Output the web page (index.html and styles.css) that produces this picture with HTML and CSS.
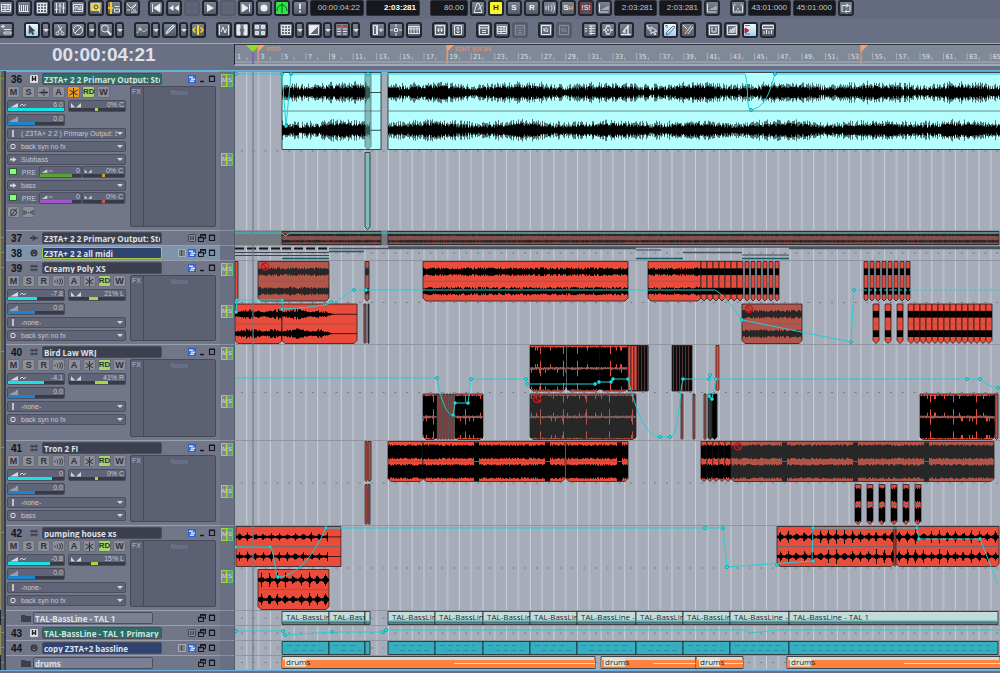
FILE: index.html
```html
<!DOCTYPE html>
<html lang="en">
<head>
    <meta charset="UTF-8">
    <meta name="viewport" content="width=device-width, initial-scale=1.0">
    <title>Track View</title>
    <link rel="stylesheet" href="styles.css">
</head>
<body>
    <!-- Icon set -->
    <svg class="icon-defs" aria-hidden="true">
        <symbol id="i-tracks" viewBox="0 0 12 12"><path d="M1.5 2.5h9v7h-9zM1.5 5h9M1.5 7.5h9M5 2.5v7M7 3.7h2M7 6.2h2"/></symbol>
        <symbol id="i-piano" viewBox="0 0 12 12"><path d="M1.5 3v6M3.5 3v6M5.5 3v6M7.5 3v6M9.5 3v6M1 9.5h10"/></symbol>
        <symbol id="i-grid" viewBox="0 0 12 12"><path d="M1.5 1.5h9v9h-9zM4.5 1.5v9M7.5 1.5v9M1.5 4.5h9M1.5 7.5h9"/></symbol>
        <symbol id="i-faders" viewBox="0 0 12 12"><path d="M2.5 1v10M6 1v10M9.5 1v10M1 7.5h3M4.5 4h3M8 6h3" /></symbol>
        <symbol id="i-mixer" viewBox="0 0 12 12"><path d="M1.5 2.5h9v7h-9zM3 4.5h3M7.5 4.5h1.5M3 7.5h1M5.5 7.5h4M1.5 6h9"/></symbol>
        <symbol id="i-find" viewBox="0 0 12 12"><path d="M1 1.5h9v7H1z" fill="#e5d95c" stroke="#e5d95c"/><circle cx="6" cy="5" r="2" stroke="#444"/><path d="M7.5 7l3 4"/></symbol>
        <symbol id="i-ylist" viewBox="0 0 12 12"><path d="M3 0v12M0 6h5" stroke="#f2c531" stroke-width="2"/><path d="M6.5 4.5h5M6.5 7h5v3h-5z"/></symbol>
        <symbol id="i-edit" viewBox="0 0 12 12"><path d="M1 2l4 4 5-4M1 8h3M5 10h6M10 3l-5 5M7 8h3"/></symbol>
        <symbol id="i-rtz" viewBox="0 0 12 12"><path d="M2.5 2v8M10 2v8L4 6z" fill="#eee"/></symbol>
        <symbol id="i-rew" viewBox="0 0 12 12"><path d="M5.5 3v6L1 6zM11 3v6L6.5 6z" fill="#eee" stroke="none"/></symbol>
        <symbol id="i-stop" viewBox="0 0 12 12"><path d="M3 3h6v6H3z" stroke="none" fill="#565b6b"/></symbol>
        <symbol id="i-play" viewBox="0 0 12 12"><path d="M3 2v8l7-4z" fill="#eee" stroke="none"/></symbol>
        <symbol id="i-pause" viewBox="0 0 12 12"><path d="M4 3v6M8 3v6" stroke="#565b6b" stroke-width="2"/></symbol>
        <symbol id="i-end" viewBox="0 0 12 12"><path d="M9.5 2v8M2 2v8l6-4z" fill="#eee"/></symbol>
        <symbol id="i-rec" viewBox="0 0 12 12"><circle cx="6" cy="6" r="3.5" fill="#eee" stroke="none"/></symbol>
        <symbol id="i-engine" viewBox="0 0 12 12"><path d="M1 9c0-8 10-8 10 0M6 1v10" stroke="#0b5a16"/></symbol>
        <symbol id="i-panic" viewBox="0 0 12 12"><path d="M6 1.5V7M6 8.500v2" stroke-width="2"/></symbol>
        <symbol id="i-metro" viewBox="0 0 12 12"><path d="M5 1.500h2l3 9H2zM6 8l4-5"/></symbol>
        <symbol id="i-waves" viewBox="0 0 12 12"><path d="M2 4v4M4 3.500c1 2 1 3 0 5M6.500 2.500c2 2 2 5 0 7M9 1.500c2 3 2 6 0 9"/></symbol>
        <symbol id="i-ramp" viewBox="0 0 12 12"><path d="M1.500 2v8h9M4 8V7M6 8V6M8 8V5M10 8V4"/></symbol>
        <symbol id="i-punch" viewBox="0 0 12 12"><path d="M1.500 10V4l2-2M10.500 10V4l-2-2M4 9h1M7 9h1M5 7h2M1.500 10h9"/></symbol>
        <symbol id="i-loop" viewBox="0 0 12 12"><path d="M3.500 9.500H2v-6h6M6 1.500l2.500 2L6 5.500M8.500 3.500H10v6H5M7 7.500l-2 2 2 2"/></symbol>
        <symbol id="i-addtrack" viewBox="0 0 12 12"><path d="M1 2.500h4M3 .5v4M4 5.500h7M4 8h7v2H4z"/></symbol>
        <symbol id="i-cursor" viewBox="0 0 12 12"><path d="M3 1v9l2-2 1.500 3 1.500-1L6.500 7H9z" fill="#3f4a58" stroke="#3f4a58" stroke-width=".5"/></symbol>
        <symbol id="i-cut" viewBox="0 0 12 12"><path d="M4 1l4 7M8 3L4 8"/><circle cx="3.500" cy="9.500" r="1.500"/><circle cx="8.500" cy="9.500" r="1.500"/></symbol>
        <symbol id="i-mute" viewBox="0 0 12 12"><circle cx="6" cy="6" r="4.500"/><path d="M3 9l6-6"/></symbol>
        <symbol id="i-zoom" viewBox="0 0 12 12"><circle cx="5" cy="4.500" r="3.500"/><path d="M7.500 7l3.500 4" stroke-width="2"/></symbol>
        <symbol id="i-env" viewBox="0 0 12 12"><path d="M1 9l3-4 4 3 3-3" stroke-dasharray="2 1"/><circle cx="4" cy="5" r="1"/></symbol>
        <symbol id="i-draw" viewBox="0 0 12 12"><path d="M2 10l1-3 6-6 1.500 1.500-6 6z" fill="#8fb0cc"/></symbol>
        <symbol id="i-scrub" viewBox="0 0 12 12"><path d="M6 1v10" stroke="#f6d81c" stroke-width="2"/><path d="M3.500 3.500L1 6l2.500 2.500M8.500 3.500L11 6 8.500 8.500" stroke="#f6d81c" stroke-width="1.500"/></symbol>
        <symbol id="i-snapa" viewBox="0 0 12 12"><path d="M1.500 1v10M10.500 1v10M3 8l2-5 2 6 1.500-4"/></symbol>
        <symbol id="i-fade" viewBox="0 0 12 12"><path d="M1 1h3v3l-1 2 1 2v3H1zM11 1H8v3l1 2-1 2v3h3z" fill="#e7e9ee"/></symbol>
        <symbol id="i-four" viewBox="0 0 12 12"><path d="M1.500 1.500h3v3h-3zM7.500 1.500h3v3h-3zM1.500 7.500h3v3h-3zM7.500 7.500h3v3h-3z" fill="#c9ccd5"/></symbol>
        <symbol id="i-contrast" viewBox="0 0 12 12"><path d="M1.500 1.500h9v9h-9z"/><path d="M1.500 1.500h9l-9 9z" fill="#eee"/></symbol>
        <symbol id="i-redlist" viewBox="0 0 12 12"><path d="M1 2h4M7 2h4" stroke="#c8343a" stroke-width="2"/><path d="M1 5h4M7 5h4M1 7.500h4M7 7.500h4M1 10h4M7 10h4"/></symbol>
        <symbol id="i-insert" viewBox="0 0 12 12"><path d="M1.500 1.500h3v9h-3zM5.500 1v10M7 6h4.500M9 4v4"/></symbol>
        <symbol id="i-move" viewBox="0 0 12 12"><path d="M4.500 4.500h3v3h-3zM6 0v3M6 9v3M0 6h3M9 6h3"/></symbol>
        <symbol id="i-film" viewBox="0 0 12 12"><path d="M.5 2.500h11v7H.5zM.5 5h11M3 2.500v7M6 2.500v7M9 2.500v7"/></symbol>
        <symbol id="i-fith" viewBox="0 0 12 12"><path d="M1.500 1.500h9v9h-9zM3 6h6M4.500 4v4M7.500 4v4M6 1v2M6 9v2"/></symbol>
        <symbol id="i-fitv" viewBox="0 0 12 12"><path d="M2.500 1.500h7v9h-7zM6 3v6M4.500 4.500L6 3l1.500 1.500M4.500 7.500L6 9l1.500-1.500"/></symbol>
        <symbol id="i-window" viewBox="0 0 12 12"><path d="M1.500 1.500h9v9h-9zM1.500 4h9M4 6.500h4M4 8.500h4"/></symbol>
        <symbol id="i-undo" viewBox="0 0 12 12"><path d="M1.500 1.500h9v9h-9zM4 4v3h3M4.500 6c1-3 4-2 3 2"/></symbol>
        <symbol id="i-align" viewBox="0 0 12 12"><path d="M5 2h6M5 4.500h6M5 7h6M5 9.500h6M1 4.500h2M1 7h2M7 1v10"/></symbol>
        <symbol id="i-spread" viewBox="0 0 12 12"><path d="M4 2h4M1 6h3M5 6h2M8 6h3M4 10h4M3 4h2M8 4h1M3 8h2M8 8h1" stroke-width="1.500"/></symbol>
        <symbol id="i-micro" viewBox="0 0 12 12"><path d="M8 1v9M8 2L3 8M1 10.500h10M3 8h3" stroke-width="1.500"/></symbol>
        <symbol id="i-pick" viewBox="0 0 12 12"><path d="M1 1l3 6M1 4h3M5 3v7l2-2 2 3 1-1-2-2.500 3-.5z"/></symbol>
        <symbol id="i-pencil" viewBox="0 0 12 12"><path d="M1 2l2-1v3M2 11l1-3 6-6 2 1-6 7z"/></symbol>
        <symbol id="i-brush" viewBox="0 0 12 12"><path d="M1 1l4 4M3 10l6-8M6 10l5-7" /><path d="M3 6l3 3" stroke="#c86a60" stroke-width="2"/></symbol>
        <symbol id="i-note" viewBox="0 0 12 12"><path d="M1.500 1.500h9v9h-9zM4 3v5h4V3"/></symbol>
        <symbol id="i-wavebox" viewBox="0 0 12 12"><path d="M1.500 1.500h9v9h-9zM3 9l2-4v4l2-5v5l2-6v6"/></symbol>
        <symbol id="i-colors" viewBox="0 0 12 12"><path d="M1 1.500h5M1 10h5"/><path d="M1 4l4 2.500L1 9z" fill="#b52b35" stroke="#b52b35"/></symbol>
        <symbol id="i-rulerbox" viewBox="0 0 12 12"><path d="M.5 1.500h11v3H.5zM2 10V7M4.500 10V6M7 10V7M9.500 10V6"/></symbol>
        <symbol id="i-restore" viewBox="0 0 8 8"><path d="M2.500 3V.5h5v4H6M.5 3.500h5v4h-5z" stroke="#15171c"/><path d="M2 1h6M0 3.500h6" stroke="#15171c" stroke-width="1.500"/></symbol>
        <symbol id="i-max" viewBox="0 0 8 8"><path d="M1.500 1.500h5v5h-5zM1 1.200h6" stroke="#15171c" stroke-width="1.200"/></symbol>
        <symbol id="i-min" viewBox="0 0 8 8"><path d="M2 6.500h4" stroke="#15171c" stroke-width="1.500"/></symbol>
        <symbol id="i-layers" viewBox="0 0 8 8"><rect width="8" height="8" rx="1" fill="#3c6fd8" stroke="#1f3f8c" stroke-width=".5"/><path d="M1 1.500h4v1.500H1zM3 3.500h4V5H3zM2 5.500h4V7H2z" fill="#cfe0ff" stroke="none"/></symbol>
        <symbol id="i-lanes" viewBox="0 0 8 8"><rect width="8" height="8" rx="1" fill="#a9adb8" stroke="none"/><path d="M1 2h6M1 4h6M1 6h6M3.500 1v6" stroke="#33363f" stroke-width=".8"/></symbol>
        <symbol id="i-freeze" viewBox="0 0 8 8"><rect x=".5" y=".5" width="7" height="7" rx="1" fill="#888c98" stroke="#33363f" stroke-width=".8"/><path d="M2.500 2v4M4 2v4M5.500 2v4" stroke="#33363f" stroke-width=".8"/></symbol>
        <symbol id="i-synth" viewBox="0 0 8 8"><rect width="8" height="8" rx="1" fill="#d9dbe0" stroke="none"/><path d="M2.500 1v5M5.500 1v5M2.500 4h3" stroke="#222" stroke-width="1.300"/></symbol>
        <symbol id="i-audio" viewBox="0 0 8 8"><path d="M0 4h8M1.500 3v2M3 1v6M4.500 2v4M6 3v2" stroke="#33363f"/></symbol>
        <symbol id="i-midi" viewBox="0 0 8 8"><circle cx="4" cy="4" r="3.500" fill="#33363f" stroke="none"/><path d="M2 4h.8M5.200 4H6M4 2v.8M3 5.500h2" stroke="#a9adb8" stroke-width=".8"/></symbol>
        <symbol id="i-stereo" viewBox="0 0 8 8"><path d="M0 2.200h8M0 5.800h8M2 .8v3M4 1.200v2M6 .8v3M2 4.500v3M4 5v2M6 4.500v3" stroke="#33363f" stroke-width=".9"/></symbol>
        <symbol id="i-folder" viewBox="0 0 10 8"><path d="M0 1h4l1 1h5v6H0z" fill="#3c3f4d" stroke="none"/></symbol>
    </svg>

    <header class="bars">
        <div class="toolbar toolbar--transport">
            <div class="group">
                <button class="btn" aria-label="Track view"><svg><use href="#i-tracks"/></svg></button>
                <button class="btn" aria-label="Piano roll"><svg><use href="#i-piano"/></svg></button>
                <button class="btn" aria-label="Step grid"><svg><use href="#i-grid"/></svg></button>
                <button class="btn" aria-label="Console"><svg><use href="#i-faders"/></svg></button>
                <button class="btn" aria-label="Mixer"><svg><use href="#i-mixer"/></svg></button>
                <button class="btn" aria-label="Browser"><svg><use href="#i-find"/></svg></button>
                <button class="btn" aria-label="Event list"><svg><use href="#i-ylist"/></svg></button>
                <button class="btn" aria-label="Tempo"><svg><use href="#i-edit"/></svg></button>
            </div>
            <div class="group group--close">
                <button class="btn" aria-label="Return to zero"><svg><use href="#i-rtz"/></svg></button>
                <button class="btn" aria-label="Rewind"><svg><use href="#i-rew"/></svg></button>
                <button class="btn btn--off" aria-label="Stop" disabled><svg><use href="#i-stop"/></svg></button>
                <button class="btn" aria-label="Play"><svg><use href="#i-play"/></svg></button>
                <button class="btn btn--off" aria-label="Pause" disabled><svg><use href="#i-pause"/></svg></button>
                <button class="btn" aria-label="Go to end"><svg><use href="#i-end"/></svg></button>
                <button class="btn" aria-label="Record"><svg><use href="#i-rec"/></svg></button>
                <button class="btn btn--green" aria-label="Audio engine"><svg><use href="#i-engine"/></svg></button>
                <button class="btn" aria-label="Reset"><svg><use href="#i-panic"/></svg></button>
                <output class="lcd lcd--wide">00:00:04:22</output>
                <output class="lcd lcd--wide lcd--lit">2:03:281</output>
            </div>
            <div class="group">
                <output class="lcd lcd--tempo">80.00</output>
                <button class="btn" aria-label="Metronome"><svg><use href="#i-metro"/></svg></button>
                <button class="btn btn--yellow">H</button>
                <button class="btn">S</button>
                <button class="btn">R</button>
                <button class="btn" aria-label="Input echo"><svg><use href="#i-waves"/></svg></button>
                <button class="btn btn--gold">S<sub>H</sub></button>
                <button class="btn btn--red">!S!</button>
                <button class="btn" aria-label="Automation"><svg><use href="#i-ramp"/></svg></button>
                <output class="lcd">2:03:281</output>
                <output class="lcd">2:03:281</output>
                <button class="btn" aria-label="Set punch"><svg><use href="#i-ramp"/></svg></button>
            </div>
            <div class="group">
                <button class="btn" aria-label="Punch in"><svg><use href="#i-punch"/></svg></button>
                <output class="lcd">43:01:000</output>
                <output class="lcd">45:01:000</output>
                <button class="btn" aria-label="Loop"><svg><use href="#i-loop"/></svg></button>
            </div>
        </div>

        <div class="toolbar toolbar--tools">
            <div class="group">
                <button class="btn" aria-label="Add track"><svg><use href="#i-addtrack"/></svg></button>
            </div>
            <div class="group">
                <div class="split"><button class="btn btn--on" aria-label="Select"><svg><use href="#i-cursor"/></svg></button><button class="btn btn--drop" aria-label="Select options"></button></div>
                <button class="btn" aria-label="Split"><svg><use href="#i-cut"/></svg></button>
                <div class="split"><button class="btn" aria-label="Mute"><svg><use href="#i-mute"/></svg></button><button class="btn btn--drop" aria-label="Mute options"></button></div>
                <div class="split"><button class="btn" aria-label="Zoom"><svg><use href="#i-zoom"/></svg></button><button class="btn btn--drop" aria-label="Zoom options"></button></div>
            </div>
            <div class="group">
                <div class="split"><button class="btn" aria-label="Envelope"><svg><use href="#i-env"/></svg></button><button class="btn btn--drop" aria-label="Envelope options"></button></div>
                <div class="split"><button class="btn" aria-label="Draw"><svg><use href="#i-draw"/></svg></button><button class="btn btn--drop" aria-label="Draw options"></button></div>
                <button class="btn" aria-label="Scrub"><svg><use href="#i-scrub"/></svg></button>
            </div>
            <div class="group">
                <button class="btn" aria-label="Transients"><svg><use href="#i-snapa"/></svg></button>
                <button class="btn" aria-label="Crossfade"><svg><use href="#i-fade"/></svg></button>
                <button class="btn" aria-label="Groups"><svg><use href="#i-four"/></svg></button>
            </div>
            <div class="group">
                <div class="split"><button class="btn" aria-label="Snap"><svg><use href="#i-grid"/></svg></button><button class="btn btn--drop" aria-label="Snap options"></button></div>
                <div class="split"><button class="btn" aria-label="Fades"><svg><use href="#i-contrast"/></svg></button><button class="btn btn--drop" aria-label="Fade options"></button></div>
                <div class="split"><button class="btn" aria-label="Ripple"><svg><use href="#i-redlist"/></svg></button><button class="btn btn--drop" aria-label="Ripple options"></button></div>
            </div>
            <div class="group">
                <button class="btn" aria-label="Insert"><svg><use href="#i-insert"/></svg></button>
                <button class="btn" aria-label="Nudge"><svg><use href="#i-move"/></svg></button>
                <button class="btn" aria-label="Video"><svg><use href="#i-film"/></svg></button>
            </div>
            <div class="group">
                <button class="btn" aria-label="Fit width"><svg><use href="#i-fith"/></svg></button>
                <button class="btn" aria-label="Fit height"><svg><use href="#i-fitv"/></svg></button>
            </div>
            <div class="group">
                <button class="btn" aria-label="Inspector"><svg><use href="#i-window"/></svg></button>
                <button class="btn" aria-label="Properties"><svg><use href="#i-tracks"/></svg></button>
                <button class="btn btn--off" aria-label="List" disabled><svg><use href="#i-window"/></svg></button>
            </div>
            <div class="group">
                <button class="btn" aria-label="Undo"><svg><use href="#i-undo"/></svg></button>
                <button class="btn btn--off" aria-label="Redo" disabled><svg><use href="#i-undo"/></svg></button>
            </div>
            <div class="group">
                <button class="btn" aria-label="Align"><svg><use href="#i-align"/></svg></button>
                <button class="btn" aria-label="Spread"><svg><use href="#i-spread"/></svg></button>
                <button class="btn" aria-label="Analyze"><svg><use href="#i-micro"/></svg></button>
            </div>
            <div class="group">
                <button class="btn" aria-label="Pick"><svg><use href="#i-pick"/></svg></button>
                <button class="btn btn--on" aria-label="Pencil"><svg><use href="#i-pencil"/></svg></button>
                <button class="btn" aria-label="Brush"><svg><use href="#i-brush"/></svg></button>
            </div>
            <div class="group">
                <button class="btn" aria-label="Notes"><svg><use href="#i-note"/></svg></button>
                <button class="btn" aria-label="Waveforms"><svg><use href="#i-wavebox"/></svg></button>
                <button class="btn btn--on" aria-label="Clip colors"><svg><use href="#i-colors"/></svg></button>
                <button class="btn" aria-label="Ruler"><svg><use href="#i-rulerbox"/></svg></button>
            </div>
        </div>

        <div class="timebar">
            <output class="clock">00:00:04:21</output>
            <svg class="ruler" id="ruler" aria-label="Bars"></svg>
        </div>
    </header>

    <main class="tracks" id="tracks"></main>
    <footer class="bottom"></footer>

    <script src="tracks.js"></script>
</body>
</html>
```
FILE: styles.css
```css
* {
    box-sizing: border-box;
}

body {
    margin: 0;
    background-color: #6a7084;
    color: #d5d8e2;
    font-family: "Liberation Sans", Arial, sans-serif;
    font-size: 8px;
    overflow-x: hidden;
}

button,
input,
select {
    margin: 0;
    padding: 0;
    border: 0;
    font-family: inherit;
    color: inherit;
}

svg {
    display: block;
    fill: none;
    stroke: #e2e5ec;
}

svg text {
    stroke: none;
}

.icon-defs {
    display: none;
}

/* Toolbars */
.toolbar {
    display: flex;
    align-items: center;
    padding: 0;
    margin-left: -2px;
}

.toolbar--transport {
    height: 19px;
    padding-bottom: 4px;
    background-color: #656b7f;
}

.toolbar--tools {
    height: 24px;
    padding-bottom: 2px;
}

.group {
    display: flex;
    flex: none;
    gap: 2px;
    margin-left: 10px;
}

.group:first-child {
    margin-left: 0;
}

.group--close {
    margin-left: 8px;
}

.split {
    display: flex;
    gap: 1px;
}

.btn {
    display: flex;
    align-items: center;
    justify-content: center;
    width: 16px;
    height: 16px;
    border: 2px solid #23262e;
    border-radius: 3px;
    background: linear-gradient(#7c8390, #545b69);
    color: #f0f1f4;
    font-size: 8px;
    font-weight: bold;
}

.btn svg {
    flex: none;
    width: 12px;
    height: 12px;
}

.btn sub {
    font-size: 6px;
    color: #e8c93a;
    vertical-align: -2px;
}

.btn--drop {
    width: 9px;
}

.btn--drop::after {
    content: "";
    border: 3px solid transparent;
    border-top-color: #e2e5ec;
    border-bottom: 0;
}

.btn--off {
    background: #5f6577;
    border-color: #565b6b;
}

.btn--off svg {
    opacity: 0.3;
}

.btn--on {
    background: linear-gradient(#f2fbff, #9ed0f0);
}

.btn--on svg {
    stroke: #5d7688;
}

.btn--green {
    background: #2ce64a;
}

.btn--yellow {
    background: #fff32a;
    color: #333;
}

.btn--red {
    color: #f0c4c6;
    background: linear-gradient(90deg, #8a2e38, #50565f 40%, #50565f 60%, #8a2e38);
    font-size: 7px;
}

.lcd {
    width: 43px;
    height: 16px;
    padding-right: 3px;
    border: 1px solid #2d3038;
    border-radius: 2px;
    background-color: #17181d;
    color: #c3c6cd;
    font-size: 8px;
    line-height: 14px;
    text-align: right;
    white-space: nowrap;
}

.lcd--wide {
    width: 54px;
}

.lcd--lit {
    color: #fff;
    font-weight: bold;
}

.lcd--tempo {
    width: 38px;
}

/* Clock and ruler */
.timebar {
    display: flex;
    height: 28px;
    border-top: 1px solid #a5a9b3;
    border-bottom: 1px solid #68b1dc;
}

.clock {
    flex: none;
    width: 234px;
    padding-left: 52px;
    color: #dfe1ea;
    font-size: 19px;
    font-weight: bold;
    line-height: 22px;
}

.ruler {
    flex: 1;
    height: 22px;
    min-width: 0;
    background-color: #7f8998;
    border-left: 1px solid #22252d;
    border-top: 1px solid #33363f;
    border-bottom: 2px solid #a3a9b5;
    font-family: "DejaVu Sans Condensed", "DejaVu Sans", sans-serif;
    font-size: 7px;
}

.ruler text {
    fill: #dfe2e9;
}

.ruler .marker {
    fill: #f0936a;
}

/* Track list */
.tracks {
    position: relative;
    border-bottom: 1px solid #68b1dc;
}

.track {
    display: flex;
}

.gutter {
    flex: none;
    width: 6px;
    border-left: 1px solid #8f8f55;
    border-right: 2px solid #3a3d49;
    background: linear-gradient(#8f8f55, #8f8f55) 0 7px / 4px 1px no-repeat #5c6173;
}

.gutter--folder {
    border-left-color: #22252d;
}

.strip {
    display: flex;
    flex: none;
    flex-direction: column;
    width: 214px;
    padding-left: 1px;
    border-top: 1px solid #9a9fae;
    background-color: #717789;
}

.track--selected .strip {
    background-color: #7f94aa;
}

.strip-head {
    display: flex;
    flex: none;
    align-items: center;
    height: 14px;
    padding-right: 4px;
}

.num {
    width: 15px;
    margin-left: 4px;
    color: #111318;
    font-size: 10px;
    font-weight: bold;
}

.kind {
    width: 8px;
    height: 8px;
    margin-left: 4px;
    margin-right: 4px;
}

.kind--folder {
    width: 10px;
    margin-left: 14px;
    margin-right: 2px;
}

.name {
    width: 120px;
    height: 12px;
    padding: 0 1px;
    border: 1px solid #4a4e5e;
    border-radius: 2px;
    background-color: #3c3f4d;
    color: #dfe2ea;
    font-family: "Open Sans", "Noto Sans", sans-serif;
    font-size: 8px;
    font-weight: 700;
    line-height: 10px;
}

.name--green {
    background-color: #2f6c66;
    color: #cfe6e0;
}

.name--blue {
    background-color: #2f4371;
}

.name--edit {
    border-color: #a6c93c;
}

.name--folder {
    background-color: #7b8192;
}

.win {
    display: flex;
    gap: 2px;
    margin-left: auto;
}

.win svg {
    width: 8px;
    height: 8px;
}

.win button {
    background: none;
}

.strip-body {
    display: flex;
    flex: 1;
    gap: 4px;
}

.controls {
    display: flex;
    flex-direction: column;
    gap: 2px;
    width: 119px;
}

.row {
    display: flex;
    justify-content: space-between;
    height: 12px;
}

.tiny {
    width: 13px;
    height: 12px;
    border: 1px solid #6a6d78;
    border-radius: 2px;
    background-color: #8e9099;
    color: #2f323b;
    font-size: 9px;
    font-weight: bold;
    line-height: 10px;
}

.tiny--orange {
    background-color: #f79a1d;
}

.tiny--lime {
    background-color: #a8d46a;
    font-size: 8px;
}

.tiny svg {
    width: 11px;
    height: 9px;
    stroke: #2f323b;
}

.row--left {
    justify-content: flex-start;
    gap: 2px;
}

.slider {
    display: flex;
    flex-direction: column;
    width: 58px;
    height: 12px;
    border: 1px solid #4a4e5e;
    border-radius: 2px;
    background-color: #5f6476;
}

.slider-top {
    display: flex;
    align-items: center;
    justify-content: space-between;
    height: 7px;
    padding: 0 1px;
    color: #c3c8d6;
    font-size: 7px;
    line-height: 7px;
}

.slider-top svg {
    width: 20px;
    height: 6px;
    stroke: #d5d8e2;
}

.slider input {
    appearance: none;
    width: 100%;
    height: 3px;
    background: linear-gradient(90deg, #383b47 var(--from), var(--fill) var(--from), var(--fill) var(--to), #383b47 var(--to));
}

.slider input::-webkit-slider-thumb {
    appearance: none;
    width: 0;
    height: 0;
}

.combo {
    display: flex;
    align-items: center;
    height: 11px;
    padding: 0 2px;
    border: 1px solid #4a4e5e;
    border-radius: 2px;
    background-color: #5f6476;
}

.combo svg {
    flex: none;
    width: 7px;
    height: 7px;
    margin-right: 4px;
}

.combo select {
    appearance: none;
    flex: 1;
    min-width: 0;
    height: 9px;
    background: none;
    color: #c3c8d6;
    font-size: 7px;
    line-height: 9px;
}

.combo::after {
    content: "";
    flex: none;
    border: 3px solid transparent;
    border-top-color: #d5d8e2;
    border-bottom: 0;
}

.send-row {
    display: flex;
    height: 12px;
    margin-top: 1px;
    border-radius: 2px;
    background-color: #5f6476;
}

.send-row .slider {
    width: 43px;
}

.send-row .slider svg {
    width: 14px;
}

.send-on {
    appearance: none;
    width: 8px;
    height: 7px;
    margin: 2px;
    border: 1px solid #2f5a33;
    background-color: #7fff7a;
}

.pre {
    width: 20px;
    background: none;
    color: #c3c8d6;
    font-size: 7px;
}

.fx {
    display: flex;
    width: 86px;
    margin-bottom: 3px;
    border: 1px solid #454958;
    border-radius: 2px;
    background-color: #5b6072;
    font-size: 7px;
}

.fx-label {
    width: 13px;
    padding: 1px;
    border-right: 1px solid #454958;
    color: #b9bfce;
}

.fx-none {
    flex: 1;
    padding-top: 2px;
    color: #777c8d;
    font-weight: bold;
    text-align: center;
}

/* Mute / solo column */
.lanes-head {
    display: flex;
    flex: none;
    flex-direction: column;
    width: 15px;
    border-top: 1px solid #8a8fa0;
    border-right: 1px solid #565b6b;
}

.lane-head {
    display: flex;
    flex: 1;
    align-items: flex-start;
    padding: 2px 0 0 1px;
}

.lane-head button {
    width: 6px;
    height: 13px;
    border: 1px solid #a6d930;
    background-color: #7f8a8e;
    color: #d5d8e2;
    font-size: 6px;
    line-height: 11px;
}

.lane-head button + button {
    border-color: #5fc47a;
}

/* Arrange area */
.arrange {
    flex: 1;
    min-width: 0;
    overflow: hidden;
    background-color: #a6adb9;
    border-top: 1px solid #90959f;
}

.arrange .grid {
    stroke: #b7bec9;
    stroke-width: 2;
}

.arrange .grid--strong {
    stroke: #cbd1dc;
    stroke-width: 1;
}

.arrange .dot {
    stroke: #747a87;
    stroke-dasharray: 2 9.8;
}

.arrange .auto {
    stroke: #27cdd3;
}

.arrange .node {
    fill: #2ff0ee;
    stroke: #14a7b0;
    stroke-width: 1;
}

.arrange .label {
    fill: #23272c;
    font-family: "Open Sans", "Noto Sans", sans-serif;
    font-size: 8px;
}

.playhead {
    position: absolute;
    top: 0;
    bottom: 0;
    left: 252px;
    width: 2px;
    background-color: #737a8c;
    opacity: 0.6;
}

.bottom {
    height: 2px;
}
```
FILE: tracks.js
```js
const BAR = 11.81;
const BARS = 170;

// repeatable noise, so the waveforms stay the same between loads
let seed = 7;
function rnd() {
    seed = (seed * 16807) % 2147483647;
    return seed / 2147483647;
}

const RED = '#ea4b3a';
const MUTED = '#b4554a';

// n clips of width w, one every step pixels
function run(x, n, step, w, opts) {
    return Array.from({ length: n }, (_, i) => ({ x: x + i * step, w, ...opts }));
}

const band = { fill: RED, wave: 'band' };
const bandMuted = { fill: MUTED, wave: 'band', muted: true };
const block = { fill: RED, wave: 'block' };
const dense = { fill: RED, wave: 'dense' };
const fat = { fill: RED, wave: 'fat' };
const hits = { fill: RED, wave: 'hits' };
const midi = [[47, 47], [94, 36], [130, 5], [153, 47], [200, 48], [248, 47], [295, 47], [342, 59], [401, 47], [448, 47], [495, 59], [554, 209]];

const tracks = [
    {
        num: 36, kind: 'synth', name: 'Z3TA+ 2 2 Primary Output: Ste', style: 'green', h: 158, synth: true,
        vol: ['6.0', 100], pan: ['0% C', 46, 52], input: '( Z3TA+ 2 2 ) Primary Output: St', out: 'back syn no fx',
        sends: [['Subbass', '#58a332', '#c2a52e'], ['bass', '#a055c8', '#c25a5a']],
        lanes: [
            [{ x: 47, w: 99, fill: '#b4fffe', wave: 'noise', until: 88, square: true }, { x: 153, w: 613, fill: '#b4fffe', wave: 'noise', square: true }, { x: 130, w: 6, fill: '#5e8f92', opacity: 0.6 }],
            [{ x: 130, w: 5, fill: '#7fbdbd' }]
        ],
        auto: ['M0 2H47L51 54L56 2H510C514 12 511 38 516 38C532 34 534 20 540 2H765'],
        nodes: [[1, 2], [47, 2], [51, 54], [56, 2], [133, 2], [516, 38], [540, 2]]
    },
    {
        num: 37, kind: 'audio', name: 'Z3TA+ 2 2 Primary Output: Ste', h: 14, win: 'fr', shade: true,
        lanes: [[{ x: 47, w: 99, fill: '#8d4b46', wave: 'band', dim: true, square: true }, { x: 153, w: 611, fill: '#8d4b46', wave: 'band', dim: true, square: true }]],
        auto: ['M0 2H47L50 5L55 2H765']
    },
    { num: 38, kind: 'midi', name: 'Z3TA+ 2 2 all midi', style: 'blue edit', selected: true, h: 14, win: 'lbr', lanes: [[]], notes: true },
    {
        num: 39, kind: 'stereo', name: 'Creamy Poly XS', h: 83,
        vol: ['-7.8', 52], pan: ['21% L', 36, 52], input: '-none-', out: 'back syn no fx',
        lanes: [
            [{ x: 0, w: 3, fill: RED }, { x: 23, w: 71, ...bandMuted, icon: true }, { x: 130, w: 4, ...bandMuted }, { x: 188, w: 205, ...band }, { x: 413, w: 53, ...band },
                ...run(466, 7, 6, 6, block), ...run(510, 6, 6, 4, block), ...run(629, 8, 6, 4, block)],
            [{ x: 0, w: 47, ...band, loud: true }, { x: 47, w: 75, ...band, loud: true, until: 52 }, { x: 129, w: 2, fill: MUTED }, { x: 133, w: 1, fill: '#333' },
                { x: 507, w: 60, ...bandMuted, icon: true }, ...run(638, 3, 12, 6, block), ...run(673, 14, 6, 6, block)]
        ],
        auto: ['M1 51L2 39H47V48C75 47 95 43 96 42C115 36 110 30 119 29H480C492 36 500 50 507 59L616 81L619 29', 'M619 29H765'],
        dashed: 1,
        nodes: [[1, 51], [2, 39], [47, 39], [47, 48], [96, 41], [119, 29], [131, 29], [507, 59], [616, 81], [619, 29]]
    },
    {
        num: 40, kind: 'stereo', name: 'Bird Law WRJ', h: 95,
        vol: ['-4.1', 64], pan: ['41% R', 47, 70], input: '-none-', out: 'back syn no fx',
        lanes: [
            [{ x: 295, w: 36, ...dense }, { x: 332, w: 33, ...dense }, { x: 365, w: 28, ...dense }, { x: 393, w: 20, fill: '#000', square: true },
                ...run(393, 3, 3, 3, { fill: RED }), ...run(403, 4, 3, 1, { fill: MUTED }),
                { x: 437, w: 20, fill: '#000', square: true }, ...run(438, 6, 3, 1, { fill: MUTED }), { x: 481, w: 3, fill: RED }],
            [{ x: 188, w: 14, ...dense }, ...run(202, 6, 3, 2, { fill: MUTED }), { x: 220, w: 28, ...dense }, { x: 295, w: 106, ...dense, fill: MUTED, muted: true, icon: true },
                { x: 446, w: 2, fill: MUTED }, { x: 458, w: 2, fill: MUTED }, { x: 469, w: 2, fill: MUTED }, { x: 473, w: 4, fill: '#333' }, { x: 477, w: 5, fill: '#000' },
                { x: 685, w: 75, ...dense }, { x: 760, w: 3, fill: MUTED }]
        ],
        auto: ['M0 33H202C206 56 212 70 218 70L220 58H233L236 34H290L292 39H360L364 37H376L378 34H393C402 70 412 92 425 92H435C444 92 444 50 448 34H474L475 30L474 51L477 54L481 34H745C752 40 756 42 763 43'],
        nodes: [[202, 33], [218, 70], [220, 58], [233, 58], [236, 34], [291, 34], [292, 39], [360, 39], [364, 37], [376, 37], [378, 34], [393, 34], [425, 92], [435, 92], [448, 34], [474, 34], [475, 30], [474, 51], [477, 54], [481, 34], [732, 34], [745, 34], [763, 43]]
    },
    {
        num: 41, kind: 'stereo', name: 'Tron 2 FI', h: 84,
        vol: ['0', 79], pan: ['0% C', 46, 52], input: '-none-', out: 'bass',
        lanes: [
            [{ x: 130, w: 2, fill: RED }, { x: 133, w: 3, fill: MUTED }, { x: 153, w: 35, ...fat }, { x: 188, w: 142, ...fat }, { x: 331, w: 62, ...fat },
                ...run(466, 5, 6, 6, fat), { x: 496, w: 263, ...fat, fill: MUTED, muted: true, icon: true }],
            [{ x: 130, w: 2, fill: RED }, { x: 133, w: 2, fill: MUTED }, ...run(620, 6, 12, 6, fat)]
        ]
    },
    {
        num: 42, kind: 'stereo', name: 'pumping house xs', h: 84,
        vol: ['-0.8', 75], pan: ['15% L', 40, 52], input: '-none-', out: 'back syn no fx',
        lanes: [
            [{ x: 1, w: 105, ...hits, until: 92, square: true }, { x: 542, w: 117, ...hits, loud: true }, { x: 659, w: 2, fill: RED }, { x: 661, w: 103, ...hits, loud: true }],
            [{ x: 23, w: 71, ...hits, loud: true }]
        ],
        auto: ['M0 21H35C40 26 40 50 43 51C64 50 80 26 91 2H488L492 41L577 35L578 2H682L684 13H745L763 58'],
        nodes: [[1, 21], [35, 21], [43, 51], [91, 2], [470, 2], [488, 2], [492, 41], [542, 39], [578, 35], [578, 2], [682, 2], [684, 13], [745, 13]]
    },
    {
        folder: true, name: 'TAL-BassLine - TAL 1', h: 14, win: 'r',
        lanes: [midi.map(([x, w]) => ({ x, w, fill: '#c4dcd9', label: w > 9 ? 'TAL-BassLine - TAL 1' : '', line: '#36b0bc', square: true }))]
    },
    {
        num: 43, kind: 'synth', name: 'TAL-BassLine - TAL 1 Primary O', style: 'green', h: 14, win: 'fr', lanes: [[]],
        auto: ['M0 5H48L50 9L97 6H148L151 4H512L516 7L540 4H765'],
        nodes: [[1, 5], [48, 5], [50, 9], [97, 6], [148, 6], [151, 4]]
    },
    {
        num: 44, kind: 'midi', name: 'copy Z3TA+2 bassline', style: 'blue', h: 14, win: 'lbr',
        lanes: [midi.map(([x, w]) => ({ x, w, fill: '#35afc0', ticks: true, square: true }))]
    },
    {
        folder: true, name: 'drums', h: 13, win: 'r',
        lanes: [[[47, 313], [366, 95], [461, 47], [552, 213]].map(([x, w]) => ({ x, w, fill: '#cfd9d2', label: 'drums', orange: true, square: true }))]
    }
];

const esc = s => s.replace(/&/g, '&amp;').replace(/</g, '&lt;');

// one channel of a clip, as one stroke for each pixel
function channel(clip, cy, half) {
    const end = clip.until || clip.w;
    let d = '', peaks = '';
    for (let i = 0; i < end; i++) {
        let a;
        const r = rnd();
        if (clip.wave === 'noise') {
            a = half * (0.16 + 0.17 * r + 0.05 * Math.sin((clip.x + i) / 14));
            const p = a + half * 0.24 * rnd();
            peaks += `M${clip.x + i + 0.5} ${(cy - p).toFixed(1)}v${(2 * p).toFixed(1)}`;
        } else if (clip.wave === 'band') {
            a = half * (clip.loud ? 0.15 + 0.35 * Math.abs(Math.sin(i / 9)) * r + 0.05 : 0.22 + 0.22 * r);
            if (clip.until && i > end - 16) a *= (end - i) / 16;
        } else if (clip.wave === 'block') {
            a = half * 0.34;
        } else if (clip.wave === 'dense') {
            a = half * (r > 0.93 ? 0.6 : 0.84 + 0.1 * rnd());
            if (i % 23 === 10) a = half * 0.3;
        } else if (clip.wave === 'fat') {
            a = half * (i % 71 > 50 && i % 71 < 56 ? 0.95 : 0.58 + 0.18 * r);
        } else {
            const t = i % 8;
            a = half * (0.08 + (clip.loud ? 0.45 : 0.28) * Math.exp(-Math.abs(t - 3) / 1.4) * (0.5 + r));
        }
        d += `M${clip.x + i + 0.5} ${(cy - a).toFixed(1)}v${(2 * a).toFixed(1)}`;
    }
    const color = clip.muted || clip.dim ? '#272727' : '#000';
    return (peaks ? `<path d="${peaks}" stroke="#000" opacity=".55"/>` : '') +
        `<path d="${d}" stroke="${color}"/>` +
        (clip.until ? `<path d="M${clip.x} ${cy}h${clip.w}" stroke="#000" stroke-width=".7"/>` : '');
}

function drawClip(clip, top, h) {
    const c = clip.square ? 0 : Math.min(3, clip.w / 2);
    const { x, w } = clip;
    let s = `<path d="M${x} ${top}h${w}v${h - c}l${-c} ${c}h${-(w - 2 * c)}l${-c} ${-c}z" fill="${clip.fill}" stroke="#202226" stroke-width=".8" opacity="${clip.opacity || 1}"/>`;
    if (clip.orange) {
        s += `<path d="M${x} ${top + 3.5}h${w}v8h${-w}z" fill="#ff8340" stroke="none"/>`;
        s += `<path d="M${x + w * 0.55} ${top + 7}h${w * 0.45}" stroke="#f4dccb"/>`;
    }
    if (clip.wave) {
        s += channel(clip, top + h * 0.26, h / 4);
        s += channel(clip, top + h * 0.75, h / 4);
        s += `<path d="M${x} ${top + h / 2}h${w}" stroke="#5d6a6c" stroke-width=".8"/>`;
    }
    if (clip.line) {
        s += `<path d="M${x} ${top + 10}h${w}" stroke="${clip.line}" stroke-width="2"/><path d="M${x} ${top + 11.5}h${w}" stroke="#202226"/>`;
    }
    if (clip.ticks) {
        s += `<path d="M${x + 5} ${top + 4}h${Math.max(0, w - 14)}M${x + 12} ${top + 9}h${Math.max(0, w - 16)}" stroke="#1f8797" stroke-dasharray="5 3" stroke-width=".8"/>`;
    }
    if (clip.label) {
        // only the letters that fit in the clip
        const text = clip.label.slice(0, Math.floor((w - 4) / 3.9));
        if (clip.orange) s += `<rect x="${x + 3}" y="${top + 1}" width="21" height="9" fill="#dfe3d8" stroke="none"/>`;
        s += `<text class="label" x="${x + 4}" y="${top + 8}">${text}</text>`;
    }
    if (clip.icon) {
        s += `<g stroke="#c4161c" stroke-width="1.5"><circle cx="${x + 7}" cy="${top + 5}" r="3.5"/><path d="M${x + 4.5} ${top + 2.5}l5 5"/></g>`;
    }
    return s;
}

function drawArrange(t) {
    let weak = '', strong = '';
    for (let b = 1; b < BARS; b++) {
        const d = `M${(b * BAR).toFixed(1)} 0V${t.h}`;
        if (b % 2) strong += d; else weak += d;
    }
    let s = `<path class="grid" d="${weak}"/><path class="grid--strong" d="${strong}"/>`;
    if (t.shade) s += `<rect width="764" height="${t.h}" fill="#757a80" stroke="none"/>`;
    s += `<path class="dot" d="M6 ${t.h / 2}H2000"/>`;
    const laneH = t.h / t.lanes.length;
    t.lanes.forEach((lane, i) => lane.forEach(clip => {
        s += drawClip(clip, i * laneH + 0.5 + i, laneH - (t.lanes.length > 1 ? 2 : 1));
    }));
    if (t.notes) {
        s += '<path d="M0 2.500h47M47 2.500h47" stroke="#15181c" stroke-width="2" stroke-dasharray="9 3"/>' +
            '<path d="M0 6.500H94M0 9.500H94M401 4h25M507 9h47" stroke="#3c4650"/>' +
            '<path d="M94 5.500H129M47 12.500H94M401 12.500h47M507 12.500h47" stroke="#155e66" stroke-width="1.500"/>' +
            '<path d="M94 2.500H401M448 6.500h59M554 2.500H765M153 1H765" stroke="#49535c" stroke-width="1.500"/>';
    }
    (t.auto || []).forEach((d, i) => {
        s += `<path class="auto" d="${d}" ${t.dashed === i ? 'stroke-dasharray="3 2"' : ''}/>`;
    });
    (t.nodes || []).forEach(([x, y]) => {
        s += `<circle class="node" cx="${x}" cy="${y}" r="1.500"/>`;
    });
    return `<div class="arrange"><svg width="100%" height="${t.h}">${s}</svg></div>`;
}

const fader = '<svg viewBox="0 0 20 6"><path d="M1 5.500L9 1v4.500z" fill="#d5d8e2" stroke="none"/><path d="M11 4l2-2 2 2 2-2" /></svg>';
const trim = '<svg viewBox="0 0 20 6"><path d="M2 6V4.500M4 6V3.500M6 6V2.500M8 6V1"/></svg>';
const panIcon = '<svg viewBox="0 0 20 6"><path d="M1 1v4.500h4zM11 1v4.500H6z" fill="#d5d8e2" stroke="none"/></svg>';

function slider(label, icon, text, from, to, color) {
    return `<label class="slider"><span class="slider-top">${icon}<span>${text}</span></span>` +
        `<input type="range" aria-label="${label}" value="${to}" style="--from:${from}%;--to:${to}%;--fill:${color}"></label>`;
}

function combo(label, icon, text) {
    return `<label class="combo"><svg viewBox="0 0 7 7">${icon}</svg><select aria-label="${label}"><option>${esc(text)}</option></select></label>`;
}

const star = '<svg viewBox="0 0 11 9"><path d="M5.500 0v9M1.500 2l8 5M9.500 2l-8 5"/></svg>';
const echo = '<svg viewBox="0 0 11 9"><path d="M2 3.500v2M4 2.500c1 1.500 1 2.500 0 4M6 1.500c2 2 2 4 0 6M8 1c2 2 2 5 0 7"/></svg>';
const arrow = '<svg viewBox="0 0 11 9"><path d="M1 4.500h9M4 2.500v4M6 1v7M8 3v3"/></svg>';

function drawControls(t) {
    const mid = t.synth
        ? `<button class="tiny" aria-label="Wave">${arrow}</button>`
        : `<button class="tiny">R</button><button class="tiny" aria-label="Echo">${echo}</button>`;
    let s = `<div class="row ${t.synth ? 'row--left' : ''}"><button class="tiny">M</button><button class="tiny">S</button>${mid}<button class="tiny">A</button>` +
        `<button class="tiny ${t.synth ? 'tiny--orange' : ''}" aria-label="Freeze">${star}</button><button class="tiny tiny--lime">RD</button><button class="tiny">W</button></div>`;
    s += `<div class="row">${slider('Volume', fader, t.vol[0], 0, t.vol[1], '#17e2e6')}${slider('Pan', panIcon, t.pan[0], t.pan[1], t.pan[2], '#a6d93c')}</div>`;
    s += `<div class="row">${slider('Trim', trim, '0.0', 0, 48, '#1a86cf')}</div>`;
    s += combo('Input', '<path d="M3 0v7" stroke-width="1.500"/>', t.input);
    s += combo('Output', '<rect x="1" y="1.500" width="4" height="4" rx="1"/>', t.out);
    (t.sends || []).forEach(([name, a, b]) => {
        s += `<div>${combo('Send', '<path d="M0 2.500h3V1l3.500 2.500L3 6V4.500H0z" fill="#d5d8e2" stroke="none"/>', name)}` +
            `<div class="send-row"><input class="send-on" type="checkbox" aria-label="${name} send on" checked><button class="pre">PRE</button>` +
            slider('Send level', fader, '0', 0, 79, a) + slider('Send pan', panIcon, '0% C', 46, 54, b) + '</div></div>';
    });
    if (t.synth) {
        s += '<div class="row row--left"><button class="tiny" aria-label="Phase"><svg viewBox="0 0 11 9"><circle cx="5.500" cy="4.500" r="3"/><path d="M2 8.500L9 .5"/></svg></button>' +
            '<button class="tiny" aria-label="Interleave"><svg viewBox="0 0 11 9"><path d="M1 2v5M10 2v5M3 3v3M8 3v3M5 4.500h1"/></svg></button></div>';
    }
    return `<div class="strip-body"><div class="controls">${s}</div><div class="fx"><span class="fx-label">FX</span><span class="fx-none">None</span></div></div>`;
}

const winIcons = { l: ['lanes', 'Lanes'], f: ['freeze', 'Freeze'], b: ['layers', 'Layers'], m: ['min', 'Minimize'], r: ['restore', 'Restore'] };

function drawTrack(t) {
    const icons = [...(t.win || 'bm')].map(k => winIcons[k]).concat([['max', 'Maximize']]);
    const win = icons.map(([id, label]) => `<button aria-label="${label}"><svg><use href="#i-${id}"/></svg></button>`).join('');
    const cls = (t.folder ? 'folder' : t.style || '').split(' ').filter(Boolean).map(c => `name--${c}`).join(' ');
    const head = (t.folder ? '' : `<span class="num">${t.num}</span>`) +
        `<svg class="kind ${t.folder ? 'kind--folder' : ''}"><use href="#i-${t.folder ? 'folder' : t.kind}"/></svg>` +
        `<input class="name ${cls}" aria-label="Track name" value="${esc(t.name)}"><div class="win">${win}</div>`;
    const lanes = t.lanes.map(() => `<div class="lane-head">${t.vol ? '<button>M</button><button>S</button>' : ''}</div>`).join('');
    return `<section class="track ${t.selected ? 'track--selected' : ''}"><div class="gutter ${t.folder ? 'gutter--folder' : ''}"></div>` +
        `<div class="strip"><div class="strip-head">${head}</div>${t.vol ? drawControls(t) : ''}</div>` +
        `<div class="lanes-head">${lanes}</div>${drawArrange(t)}</section>`;
}

function drawRuler() {
    const ruler = document.getElementById('ruler');
    const bars = Math.floor(ruler.getBoundingClientRect().width / BAR) + 1;
    let s = '', ticks = '';
    for (let b = 0; b < bars; b++) {
        const x = (b * BAR).toFixed(1);
        ticks += b % 2 ? `M${x} 12v3` : `M${x} 8v7`;
        if (b % 2 === 0) s += `<text x="${(b * BAR + 2).toFixed(1)}" y="14">${b + 1}</text>`;
    }
    s += `<path d="${ticks}M0 17H2000" stroke="#b4bac6" stroke-width=".8"/>`;
    s += '<path d="M18 4v18" stroke="#7a62c8" stroke-width="2"/><path d="M11 0h14l-7 7z" fill="#8fe01c" stroke="none"/>';
    [[23, 'intro'], [212, 'start vocals'], [626, '']].forEach(([x, text]) => {
        s += `<path d="M${x} 0v20" stroke="#f0986f"/><path d="M${x} 0h7l-7 7z" fill="#ff9d6b" stroke="none"/>`;
        if (text) s += `<text class="marker" x="${x + 8}" y="6">${text}</text>`;
    });
    ruler.innerHTML = s;
}

document.getElementById('tracks').innerHTML = tracks.map(drawTrack).join('') + '<div class="playhead"></div>';
drawRuler();
window.addEventListener('resize', drawRuler);
```
